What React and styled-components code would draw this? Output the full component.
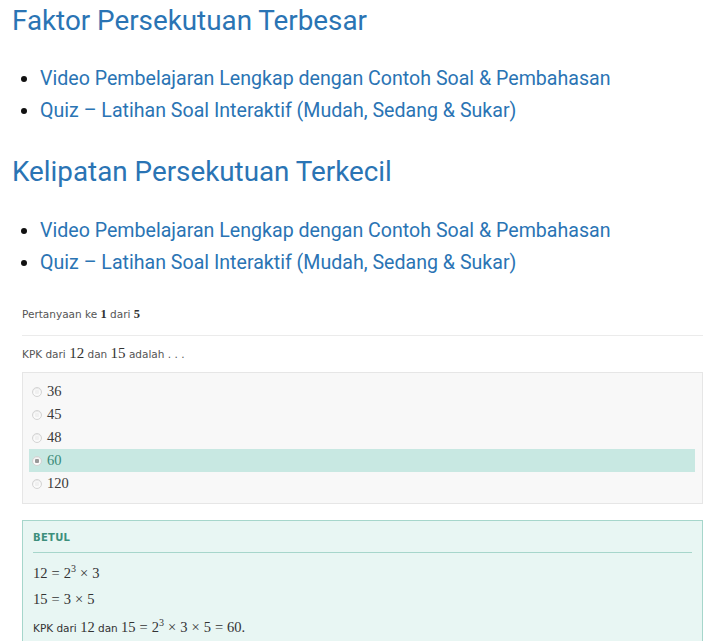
import React from "react";
import styled, { createGlobalStyle } from "styled-components";

const GlobalStyle = createGlobalStyle`
  body {
    margin: 0;
    background: #fff;
    font-family: Roboto, "Noto Sans", sans-serif;
  }
`;

const Page = styled.div`
  padding: 0 5px 0 12px;
`;

const Heading = styled.h2`
  margin: 0;
  padding-top: ${(p) => p.$top || 0}px;
  font-size: 27.8px;
  font-weight: 400;
  line-height: 36px;
  color: #2a74b4;
`;

const LinkList = styled.ul`
  margin: ${(p) => p.$top || 24}px 0 0;
  padding-left: 28px;
  list-style: disc;
`;

const LinkItem = styled.li`
  font-size: 19.6px;
  line-height: 32px;
  color: #2a74b4;

  &::marker {
    color: #111;
  }
`;

const Quiz = styled.div`
  margin-top: 16px;
  padding-left: 10px;
  font-family: "DejaVu Sans", Verdana, sans-serif;
  font-size: 10.5px;
  color: #555;
`;

const Counter = styled.div`
  padding: 12px 0 13px;
  border-bottom: 1px solid #ebebeb;
`;

const Question = styled.div`
  padding: 9px 0 10px;
`;

const Num = styled.span`
  font-family: "Liberation Serif", "DejaVu Serif", serif;
  font-size: ${(p) => p.$size || 15}px;
  font-weight: ${(p) => (p.$bold ? 700 : 400)};
  color: #333;
`;

const Options = styled.div`
  background: #f8f8f8;
  border: 1px solid #e6e6e6;
  padding: 7px 7px 8px 6px;
  display: flex;
  flex-direction: column;
`;

const Option = styled.label`
  display: flex;
  align-items: center;
  gap: 5px;
  height: 23px;
  padding-left: 3px;
  background: ${(p) => (p.$picked ? "#c8e8e2" : "transparent")};
  font-family: "Liberation Serif", "DejaVu Serif", serif;
  font-size: 14.5px;
  color: ${(p) => (p.$picked ? "#3a8a78" : "#3a3a3a")};
`;

const Radio = styled.span`
  width: 8px;
  height: 8px;
  border-radius: 50%;
  border: 1px solid #d4d4d4;
  background: radial-gradient(circle, ${(p) => (p.$picked ? "#999 0 2px" : "#f0f0f0 0 2px")}, #fafafa 2.5px);
  box-shadow: inset 0 1px 1px rgba(0, 0, 0, 0.08);
`;

const Result = styled.div`
  margin-top: 16px;
  background: #e8f6f3;
  border: 1px solid #a6d6cb;
  border-bottom: none;
  padding: 10px 10px 6px 10px;
  color: #333;
`;

const ResultTitle = styled.div`
  font-weight: 700;
  font-size: 10px;
  letter-spacing: 0.3px;
  color: #3d8f7c;
  padding: 1px 0 9px;
  border-bottom: 1px solid #a6d6cb;
`;

const MathLine = styled.div`
  margin-top: ${(p) => p.$gap || 10}px;
  height: 16px;
  display: flex;
  align-items: baseline;
  white-space: pre;
`;

const M = styled.span`
  font-family: "Liberation Serif", "DejaVu Serif", serif;
  font-size: 14.5px;
  color: #333;

  sup {
    font-size: 10px;
    line-height: 0;
  }
`;

const Op = styled.span`
  margin: 0 4px;
`;

const options = ["36", "45", "48", "60", "120"];

const links = [
  "Video Pembelajaran Lengkap dengan Contoh Soal & Pembahasan",
  "Quiz \u2013 Latihan Soal Interaktif (Mudah, Sedang & Sukar)",
];

export default function App() {
  return (
    <>
      <GlobalStyle />
      <Page>
        <Heading $top={3}>Faktor Persekutuan Terbesar</Heading>
        <LinkList>
          {links.map((l) => (
            <LinkItem key={l}>{l}</LinkItem>
          ))}
        </LinkList>
        <Heading $top={27}>Kelipatan Persekutuan Terkecil</Heading>
        <LinkList $top={25}>
          {links.map((l) => (
            <LinkItem key={l}>{l}</LinkItem>
          ))}
        </LinkList>

        <Quiz>
          <Counter>
            Pertanyaan ke <Num $size={12.5} $bold>1</Num> dari <Num $size={12.5} $bold>5</Num>
          </Counter>
          <Question>
            KPK dari <Num>12</Num> dan <Num>15</Num> adalah . . .
          </Question>
          <Options>
            {options.map((o) => (
              <Option key={o} $picked={o === "60"}>
                <Radio $picked={o === "60"} />
                {o}
              </Option>
            ))}
          </Options>

          <Result>
            <ResultTitle>BETUL</ResultTitle>
            <MathLine $gap={12}>
              <M>
                12<Op>=</Op>2<sup>3</sup><Op>×</Op>3
              </M>
            </MathLine>
            <MathLine>
              <M>
                15<Op>=</Op>3<Op>×</Op>5
              </M>
            </MathLine>
            <MathLine $gap={12}>
              KPK dari <M>12</M> dan{" "}
              <M>
                15<Op>=</Op>2<sup>3</sup><Op>×</Op>3<Op>×</Op>5<Op>=</Op>60.
              </M>
            </MathLine>
          </Result>
        </Quiz>
      </Page>
    </>
  );
}
